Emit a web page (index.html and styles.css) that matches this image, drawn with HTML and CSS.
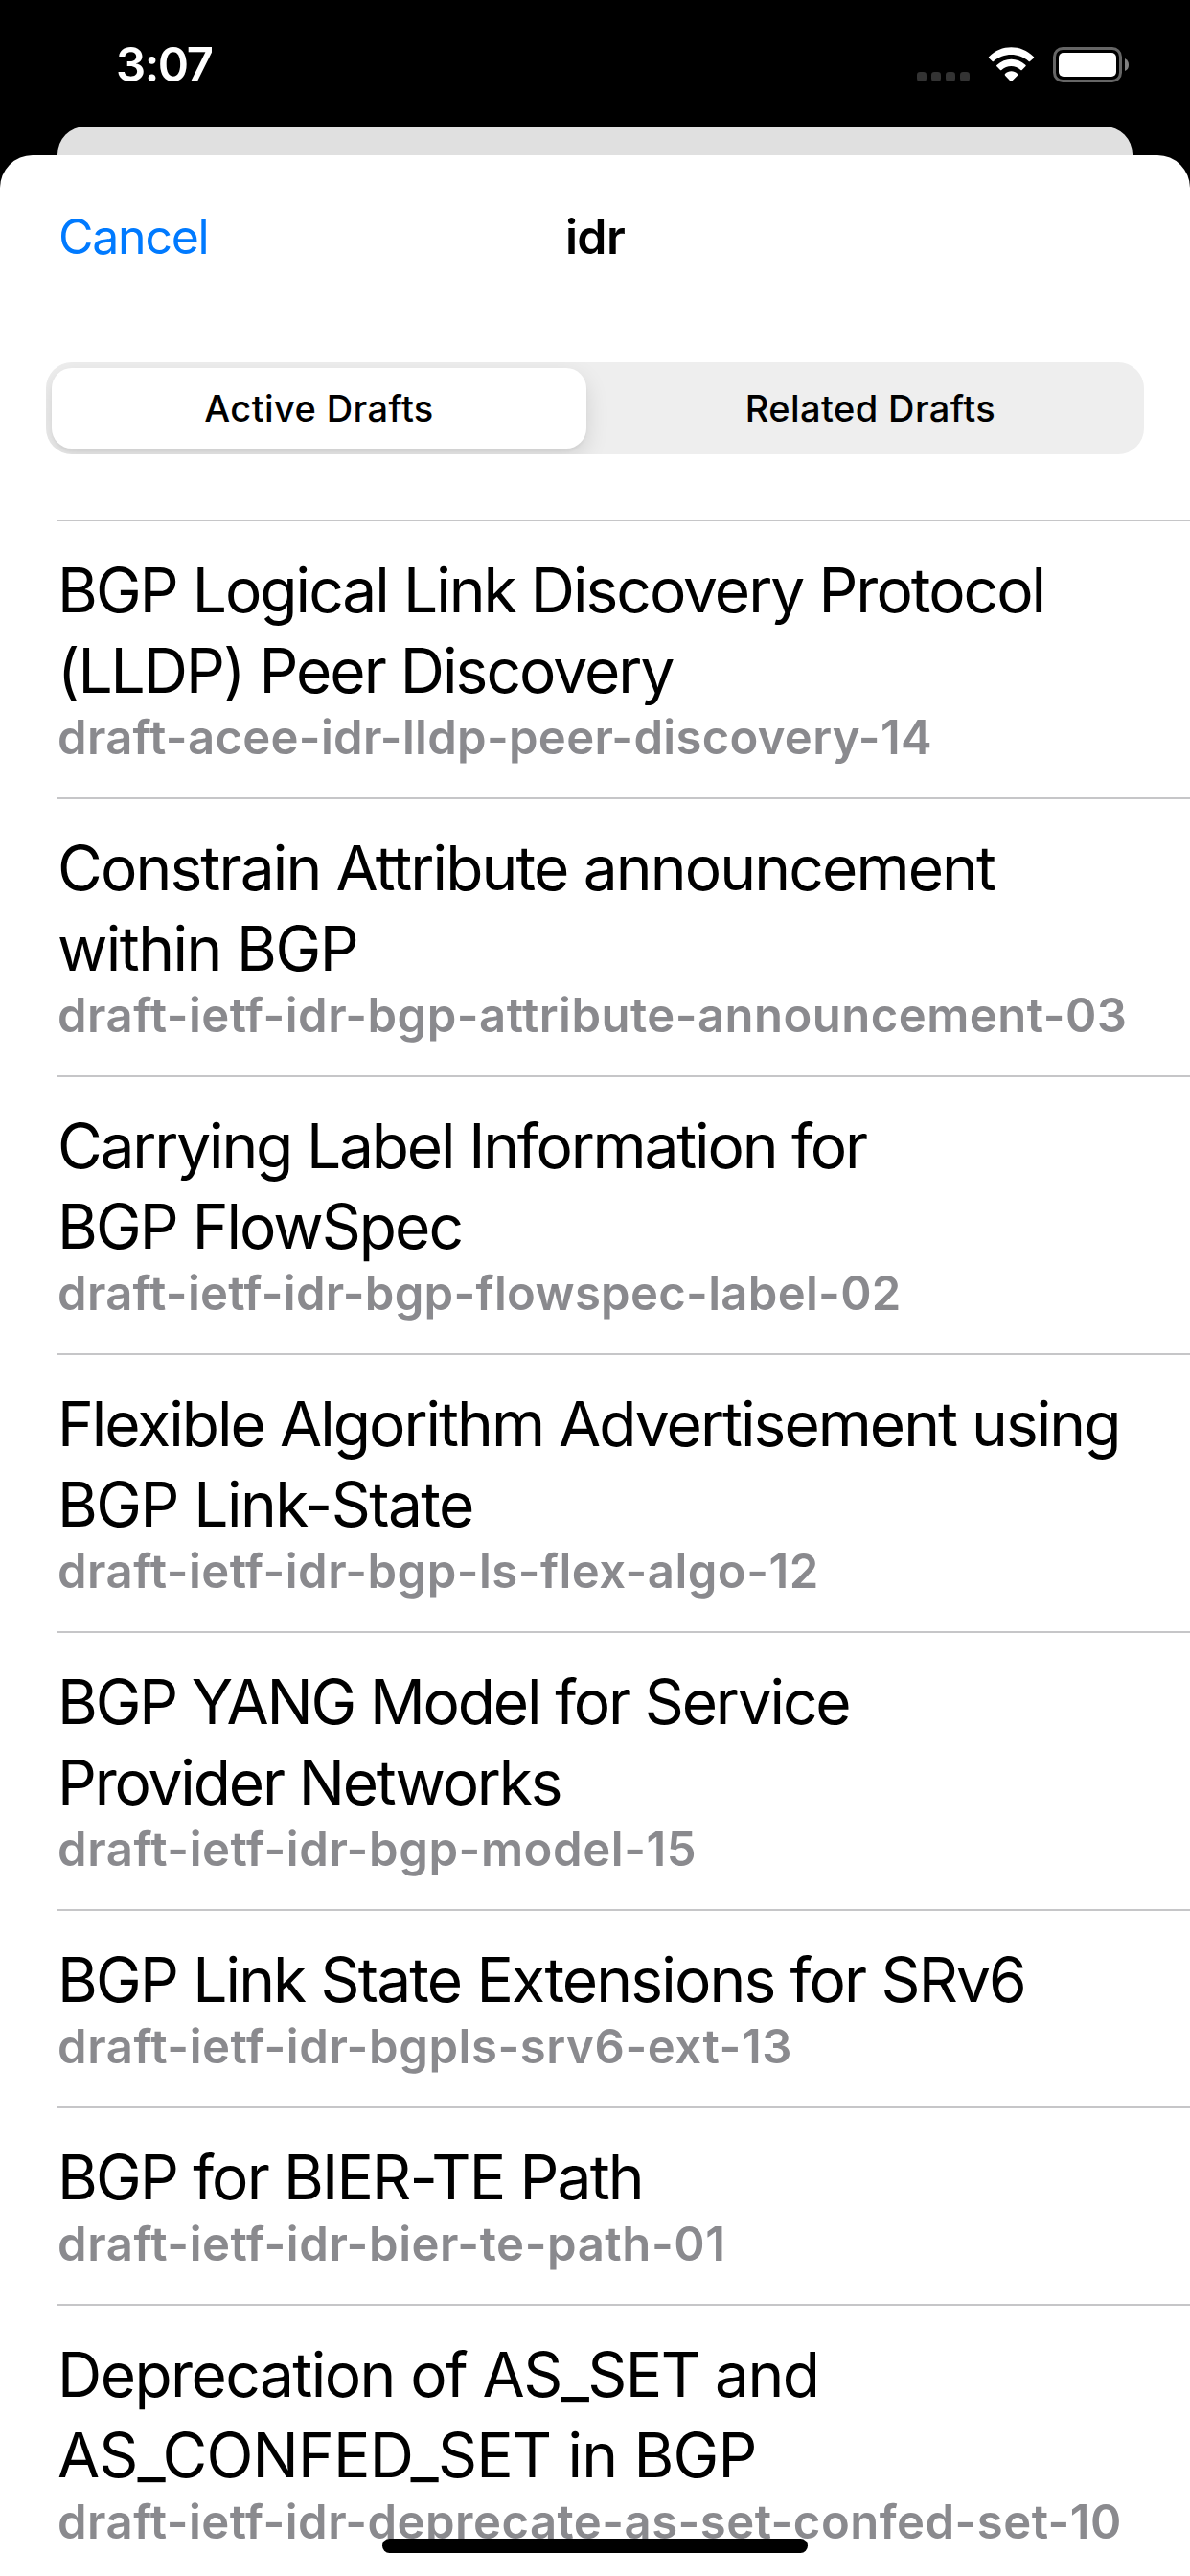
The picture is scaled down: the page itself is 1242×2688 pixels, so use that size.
FILE: index.html
```html
<!DOCTYPE html>
<html lang="en">
<head>
<meta charset="utf-8">
<title>idr</title>
<link rel="stylesheet" href="styles.css">
</head>
<body>
<div class="screen">
  <div class="status">
    <span class="time">3:07</span>
    <svg class="status-icons" viewBox="165 141 675 120" aria-hidden="true">
      <g fill="#333">
        <rect x="171" y="225" width="30" height="30" rx="10"/>
        <rect x="216" y="225" width="30" height="30" rx="10"/>
        <rect x="261" y="225" width="30" height="30" rx="10"/>
        <rect x="306" y="225" width="30" height="30" rx="10"/>
      </g>
      <g fill="#fff">
        <path d="M397 177C435 138 497 138 536 177q3 2 0 5L525 192q-2 2-4 0C490 164 442 164 411 192q-2 2-4 0L397 182q-3-3 0-5z"/>
        <path d="M422 203C447 179 486 179 511 203q3 3 0 5L500 219q-2 2-4 0C479 203 453 203 436 219q-2 2-4 0L421 208q-3-3 1-5z"/>
        <path d="M447 231C458 220 475 220 486 231q2 2 0 5L468 254q-2 2-4 0L447 236q-2-3 0-5z"/>
        <rect x="615" y="165" width="180" height="75" rx="15"/>
      </g>
      <rect x="601.5" y="151.5" width="207" height="102" rx="26" fill="none" stroke="#666" stroke-width="9"/>
      <path d="M822 183q12 6 12 20t-12 19z" fill="#808080"/>
    </svg>
  </div>
  <div class="card-behind"></div>
  <main class="sheet">
    <header class="nav">
      <a class="cancel">Cancel</a>
      <h1 class="heading">idr</h1>
    </header>
    <div class="segmented">
      <div class="segment selected">Active Drafts</div>
      <div class="segment">Related Drafts</div>
    </div>
    <ul class="list">
      <li class="row">
        <div class="title"><span class="line">BGP Logical Link Discovery Protocol</span><span class="line">(LLDP) Peer Discovery</span></div>
        <div class="name narrow">draft-acee-idr-lldp-peer-discovery-14</div>
      </li>
      <li class="row">
        <div class="title"><span class="line loose">Constrain Attribute announcement</span><span class="line looser">within BGP</span></div>
        <div class="name">draft-ietf-idr-bgp-attribute-announcement-03</div>
      </li>
      <li class="row">
        <div class="title"><span class="line tight">Carrying Label Information for</span><span class="line">BGP FlowSpec</span></div>
        <div class="name narrow">draft-ietf-idr-bgp-flowspec-label-02</div>
      </li>
      <li class="row">
        <div class="title"><span class="line">Flexible Algorithm Advertisement using</span><span class="line looser">BGP Link-State</span></div>
        <div class="name">draft-ietf-idr-bgp-ls-flex-algo-12</div>
      </li>
      <li class="row">
        <div class="title"><span class="line tight">BGP YANG Model for Service</span><span class="line tight">Provider Networks</span></div>
        <div class="name wide">draft-ietf-idr-bgp-model-15</div>
      </li>
      <li class="row">
        <div class="title"><span class="line loose">BGP Link State Extensions for SRv6</span></div>
        <div class="name wide">draft-ietf-idr-bgpls-srv6-ext-13</div>
      </li>
      <li class="row">
        <div class="title"><span class="line loose">BGP for BIER-TE Path</span></div>
        <div class="name wide">draft-ietf-idr-bier-te-path-01</div>
      </li>
      <li class="row">
        <div class="title"><span class="line looser">Deprecation of AS_SET and</span><span class="line open">AS_CONFED_SET in BGP</span></div>
        <div class="name">draft-ietf-idr-deprecate-as-set-confed-set-10</div>
      </li>
    </ul>
  </main>
  <div class="home-indicator"></div>
</div>
</body>
</html>
```
FILE: styles.css
```css
* { box-sizing: border-box; }

body {
  margin: 0;
  background: #000;
  font-family: Inter, "Liberation Sans", sans-serif;
  color: #000;
}

.screen {
  position: relative;
  display: flex;
  flex-direction: column;
  width: 1242px;
  height: 2688px;
  overflow: hidden;
}

/* Status bar */
.status {
  flex: none;
  display: flex;
  justify-content: space-between;
  align-items: flex-start;
  height: 132px;
  padding: 0 62px 0 121px;
}

.time {
  margin-top: 38px;
  font-size: 49px;
  font-weight: 600;
  line-height: 60px;
  letter-spacing: -1.5px;
  color: #fff;
}

.status-icons {
  width: 225px;
  height: 40px;
  margin-top: 47px;
}

/* Presented sheet, with the parent view peeking out above it */
.card-behind {
  flex: none;
  height: 30px;
  margin: 0 60px;
  border-radius: 29px 29px 0 0;
  background: #e0e0e0;
}

.sheet {
  flex: 1;
  min-height: 0;
  overflow: hidden;
  border-radius: 34px 34px 0 0;
  background: #fff;
}

.nav {
  display: grid;
  grid-template-columns: 1fr auto 1fr;
  height: 216px;
  padding: 55px 61px 0;
  font-size: 50px;
  line-height: 60px;
}

.cancel {
  color: #007aff;
  letter-spacing: -1.25px;
}

.heading {
  margin: 0;
  font-size: 50px;
  font-weight: 600;
  letter-spacing: -0.65px;
}

.segmented {
  display: flex;
  height: 96px;
  margin: 0 48px 69px;
  padding: 6px;
  border-radius: 27px;
  background: #eee;
  overflow: hidden;
}

.segment {
  flex: 1;
  padding-left: 17px;
  font-size: 38px;
  font-weight: 500;
  line-height: 84px;
  letter-spacing: 0.4px;
  text-align: center;
}

.segment.selected {
  flex: 0 0 558px;
  padding-left: 0;
  border-radius: 21px;
  background: #fff;
  box-shadow: 0 9px 24px rgba(0, 0, 0, 0.12), 0 3px 3px rgba(0, 0, 0, 0.04);
}

/* Draft list */
.list {
  margin: 0 0 0 60px;
  padding: 0;
  border-top: 1px solid #c6c6c8;
  list-style: none;
}

.row {
  padding: 30px 0 34px;
  border-bottom: 2px solid #c6c6c8;
}

.title {
  font-size: 64px;
  line-height: 84px;
  letter-spacing: -1.96px;
}

.line {
  display: block;
  white-space: nowrap;
}

.tight { letter-spacing: -2.16px; }
.loose { letter-spacing: -1.84px; }
.looser { letter-spacing: -1.55px; }
.open { letter-spacing: -0.8px; }

.name {
  font-size: 49px;
  font-weight: 600;
  line-height: 56px;
  letter-spacing: 0.48px;
  white-space: nowrap;
  color: #8a8a8e;
}

.name.narrow { letter-spacing: 0.3px; }
.name.wide { letter-spacing: 0.58px; }

.home-indicator {
  position: absolute;
  left: 399px;
  bottom: 24px;
  width: 444px;
  height: 15px;
  border-radius: 8px;
  background: #000;
}
```
